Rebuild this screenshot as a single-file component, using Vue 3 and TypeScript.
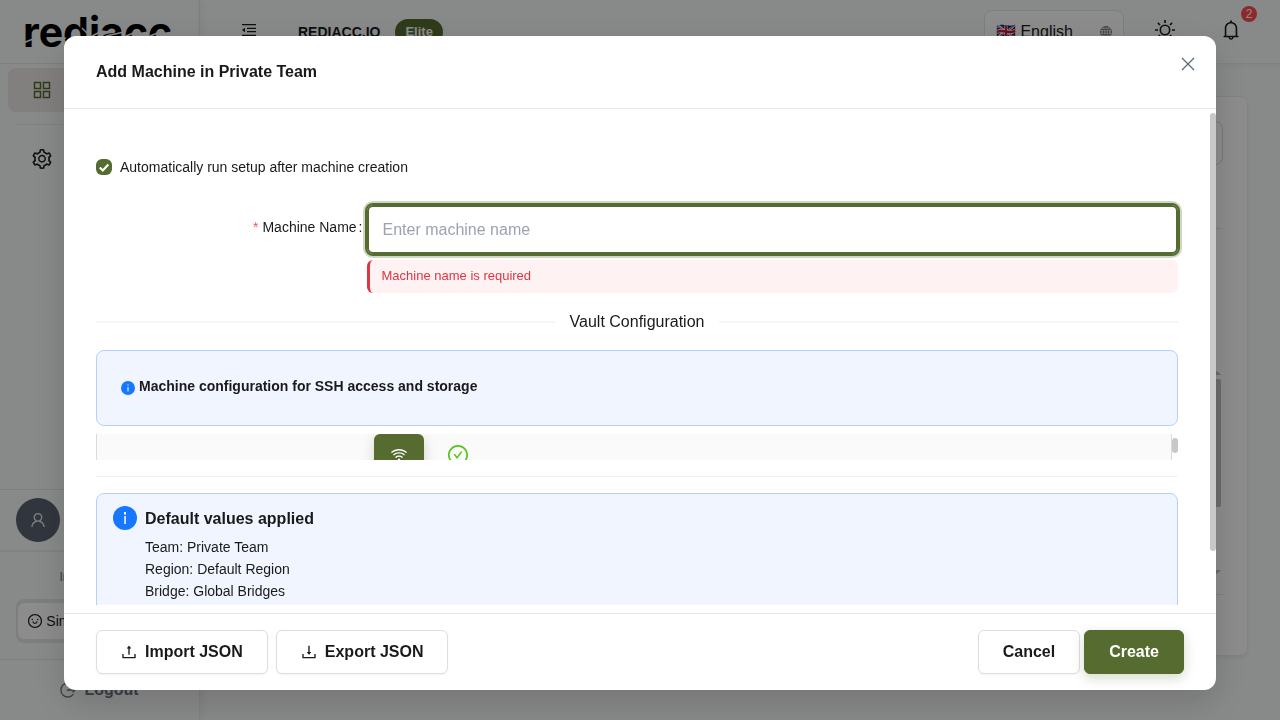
<script setup lang="ts">
import { ref } from 'vue'

const autoSetup = ref(true)
const machineName = ref('')
const language = ref('en')

const defaults: string[] = [
  'Team: Private Team',
  'Region: Default Region',
  'Bridge: Global Bridges',
]

const icons = {
  tray: 'M878 626h-60c-4.4 0-8 3.6-8 8v154H214V634c0-4.4-3.6-8-8-8h-60c-4.4 0-8 3.6-8 8v198c0 17.7 14.3 32 32 32h684c17.7 0 32-14.3 32-32V634c0-4.4-3.6-8-8-8z',
  up: 'M400 317.7h73.9V656c0 4.4 3.6 8 8 8h60c4.4 0 8-3.6 8-8V317.7H624c6.7 0 10.4-7.7 6.3-12.9L518.3 163a8 8 0 00-12.6 0l-112 141.7c-4.1 5.3-.4 13 6.3 13z',
  down: 'M505.7 661a8 8 0 0012.6 0l112-141.7c4.1-5.2.4-12.9-6.3-12.9h-74.1V168c0-4.4-3.6-8-8-8h-60c-4.4 0-8 3.6-8 8v338.3H400c-6.7 0-10.4 7.7-6.3 12.9l112 141.8z',
  ring: 'M512 64C264.6 64 64 264.6 64 512s200.6 448 448 448 448-200.6 448-448S759.4 64 512 64zm0 820c-205.4 0-372-166.6-372-372s166.6-372 372-372 372 166.6 372 372-166.6 372-372 372z',
  tick: 'M699 353h-46.9c-10.2 0-19.9 4.9-25.9 13.3L469 584.3l-71.2-98.8c-6-8.3-15.6-13.3-25.9-13.3H325c-6.5 0-10.3 7.4-6.5 12.7l124.6 172.8a31.8 31.8 0 0051.7 0l210.6-292c3.9-5.3.1-12.7-6.4-12.7z',
  smile: 'M288 421a48 48 0 1096 0 48 48 0 10-96 0zm352 0a48 48 0 1096 0 48 48 0 10-96 0zM664 533h-48.1c-4.2 0-7.8 3.2-8.1 7.4C604 589.9 562.5 629 512 629s-92.1-39.1-95.8-88.6c-.3-4.2-3.9-7.4-8.1-7.4H360a8 8 0 00-8 8.4c4.4 84.3 74.5 151.6 160 151.6s155.6-67.3 160-151.6a8 8 0 00-8-8.4z',
  bell: 'M816 768h-24V428c0-141.1-104.3-257.7-240-277.1V112c0-22.1-17.9-40-40-40s-40 17.9-40 40v38.9c-135.7 19.4-240 136-240 277.1v340h-24c-17.7 0-32 14.3-32 32v32c0 4.4 3.6 8 8 8h216c0 61.8 50.2 112 112 112s112-50.2 112-112h216c4.4 0 8-3.6 8-8v-32c0-17.7-14.3-32-32-32zM512 888c-26.5 0-48-21.5-48-48h96c0 26.5-21.5 48-48 48zM304 768V428c0-55.6 21.6-107.8 60.9-147.1S456.4 220 512 220c55.6 0 107.8 21.6 147.1 60.9S720 372.4 720 428v340H304z',
  user: 'M858.5 763.6a374 374 0 00-80.6-119.5 375.63 375.63 0 00-119.5-80.6c-.4-.2-.8-.3-1.2-.5C719.5 518 760 444.7 760 362c0-137-111-248-248-248S264 225 264 362c0 82.7 40.5 156 102.8 201.1-.4.2-.8.3-1.2.5-44.8 18.9-85 46-119.5 80.6a375.63 375.63 0 00-80.6 119.5A371.7 371.7 0 00136 901.8a8 8 0 008 8.2h60c4.4 0 7.9-3.5 8-7.8 2-77.2 33-149.5 87.8-204.3 56.7-56.7 132-87.9 212.2-87.9s155.5 31.2 212.2 87.9C779 752.7 810 825 812 902.2c.1 4.4 3.6 7.8 8 7.8h60a8 8 0 008-8.2c-1-47.8-10.9-94.3-29.5-138.2zM512 534c-45.9 0-89.1-17.9-121.6-50.4S340 407.9 340 362c0-45.9 17.9-89.1 50.4-121.6S466.1 190 512 190s89.1 17.9 121.6 50.4S684 316.1 684 362c0 45.9-17.9 89.1-50.4 121.6S557.9 534 512 534z',
  gear: 'M924.8 625.7l-65.5-56c3.1-19 4.7-38.4 4.7-57.8s-1.6-38.8-4.7-57.8l65.5-56a32.03 32.03 0 009.3-35.2l-.9-2.6a443.74 443.74 0 00-79.7-137.9l-1.8-2.1a32.12 32.12 0 00-35.1-9.5l-81.3 28.9c-30-24.6-63.5-44-99.7-57.6l-15.7-85a32.05 32.05 0 00-25.8-25.7l-2.7-.5c-52.1-9.4-106.9-9.4-159 0l-2.7.5a32.05 32.05 0 00-25.8 25.7l-15.8 85.4a351.86 351.86 0 00-99 57.4l-81.9-29.1a32 32 0 00-35.1 9.5l-1.8 2.1a446.02 446.02 0 00-79.7 137.9l-.9 2.6c-4.5 12.5-.8 26.5 9.3 35.2l66.3 56.6c-3.1 18.8-4.6 38-4.6 57.1 0 19.2 1.5 38.4 4.6 57.1L99 625.5a32.03 32.03 0 00-9.3 35.2l.9 2.6c18.1 50.4 44.9 96.9 79.7 137.9l1.8 2.1a32.12 32.12 0 0035.1 9.5l81.9-29.1c29.8 24.5 63.1 43.9 99 57.4l15.8 85.4a32.05 32.05 0 0025.8 25.7l2.7.5a449.4 449.4 0 00159 0l2.7-.5a32.05 32.05 0 0025.8-25.7l15.7-85a350 350 0 0099.7-57.6l81.3 28.9a32 32 0 0035.1-9.5l1.8-2.1c34.8-41.1 61.6-87.5 79.7-137.9l.9-2.6c4.5-12.3.8-26.3-9.3-35zM788.3 465.9c2.5 15.1 3.8 30.6 3.8 46.1s-1.3 31-3.8 46.1l-6.6 40.1 74.7 63.9a370.03 370.03 0 01-42.6 73.6L721 702.8l-31.4 25.8c-23.9 19.6-50.5 35-79.3 45.8l-38.1 14.3-17.9 97a377.5 377.5 0 01-85 0l-17.9-97.2-37.8-14.5c-28.5-10.8-55-26.2-78.7-45.7l-31.4-25.9-93.4 33.2c-17-22.9-31.2-47.6-42.6-73.6l75.5-64.5-6.5-40c-2.4-14.9-3.7-30.3-3.7-45.5 0-15.3 1.2-30.6 3.7-45.5l6.5-40-75.5-64.5c11.3-26.1 25.6-50.7 42.6-73.6l93.4 33.2 31.4-25.9c23.7-19.5 50.2-34.9 78.7-45.7l37.9-14.3 17.9-97.2c28.1-3.2 56.8-3.2 85 0l17.9 97 38.1 14.3c28.7 10.8 55.4 26.2 79.3 45.8l31.4 25.8 92.8-32.9c17 22.9 31.2 47.6 42.6 73.6L781.8 426l6.5 39.9zM512 326c-97.2 0-176 78.8-176 176s78.8 176 176 176 176-78.8 176-176-78.8-176-176-176zm79.2 255.2A111.6 111.6 0 01512 614c-29.9 0-58-11.7-79.2-32.8A111.6 111.6 0 01400 502c0-29.9 11.7-58 32.8-79.2C454 401.6 482.1 390 512 390c29.9 0 58 11.6 79.2 32.8A111.6 111.6 0 01624 502c0 29.9-11.7 58-32.8 79.2z',
  wifi: 'M723 620.5C666.8 571.6 593.4 542 513 542s-153.8 29.6-210.1 78.6a8.1 8.1 0 00-.8 11.2l36 42.9c2.9 3.4 8 3.8 11.4.9C393.1 637.2 450.3 614 513 614s119.9 23.2 163.5 61.5c3.4 2.9 8.5 2.5 11.4-.9l36-42.9c2.8-3.3 2.4-8.3-.9-11.2zm117.4-140.1C751.7 406.5 637.6 362 513 362s-238.7 44.5-327.5 118.4a8.05 8.05 0 00-1 11.3l36 42.9c2.8 3.4 7.9 3.8 11.2 1C308 472.2 406.1 434 513 434s205 38.2 281.2 101.6c3.4 2.8 8.4 2.4 11.2-1l36-42.9c2.8-3.4 2.4-8.5-1-11.3zm116.7-139C835.7 241.8 680.3 182 511 182c-168.2 0-322.6 59-443.7 157.4a8 8 0 00-1.1 11.4l36 42.9c2.8 3.3 7.8 3.8 11.1 1.1C222 306.3 360.3 254 511 254c151.8 0 291 53.5 400 142.7 3.4 2.8 8.4 2.3 11.2-1.1l36-42.9c2.9-3.4 2.4-8.5-1.1-11.3zM448 778a64 64 0 10128 0 64 64 0 10-128 0z',
}
</script>

<template>
  <div class="app">
    <aside class="sidebar">
      <a class="brand" href="#" aria-label="rediacc">
        <svg width="160" height="48" viewBox="0 0 160 48">
          <text class="wordmark" x="1" y="39">rediacc</text>
          <path class="cut" d="M1 35l10-4M28 34l16-4M60 20l8 8M70 28l10-5M84 28l18-4M104 28l10-4M128 28l10-4" />
        </svg>
      </a>
      <nav class="menu">
        <a class="menu-item active" href="#" aria-label="Dashboard">
          <svg width="20" height="20" viewBox="0 0 20 20" fill="none" stroke="currentColor" stroke-width="1.5">
            <path d="M2.500 2.500h6v6h-6zM11.500 2.500h6v6h-6zM2.500 11.500h6v6h-6zM11.500 11.500h6v6h-6z" />
          </svg>
        </a>
        <hr class="menu-rule" />
        <a class="menu-item" href="#" aria-label="Settings">
          <svg width="20" height="20" viewBox="64 64 896 896" fill="currentColor"><path :d="icons.gear" /></svg>
        </a>
      </nav>
      <div class="profile">
        <span class="avatar">
          <svg width="16" height="16" viewBox="64 64 896 896" fill="currentColor"><path :d="icons.user" /></svg>
        </span>
      </div>
      <div class="mode">
        <span class="mode-label">Interface Mode</span>
        <div class="segmented">
          <button type="button" class="segment on">
            <svg width="14" height="14" viewBox="64 64 896 896" fill="currentColor"><path :d="icons.ring" /><path :d="icons.smile" /></svg>
            Simple
          </button>
          <button type="button" class="segment">Expert</button>
        </div>
      </div>
      <button type="button" class="logout">
        <svg width="16" height="16" viewBox="0 0 16 16" fill="none" stroke="currentColor" stroke-width="1.300">
          <path d="M13.500 3.800A7 7 0 1 0 13.500 12.200M7 8h8M12.500 5.500L15 8l-2.500 2.500" />
        </svg>
        Logout
      </button>
    </aside>

    <div class="main">
      <header class="topbar">
        <button type="button" class="icon-btn fold" aria-label="Collapse menu">
          <svg width="16" height="16" viewBox="0 0 16 16" fill="none" stroke="currentColor" stroke-width="1.300">
            <path d="M1 2.700h14M6 6.300h9M6 9.700h9M1 13.300h14" />
            <path d="M4 5.700v4.600L1 8z" fill="currentColor" stroke="none" />
          </svg>
        </button>
        <strong class="org">REDIACC.IO</strong>
        <span class="plan">Elite</span>
        <div class="tools">
          <label class="lang">
            <select v-model="language" aria-label="Language">
              <option value="en">🇬🇧 English</option>
            </select>
            <svg width="12" height="12" viewBox="0 0 12 12" fill="none" stroke="currentColor">
              <circle cx="6" cy="6" r="5.500" />
              <ellipse cx="6" cy="6" rx="2.500" ry="5.500" />
              <path d="M6 .5v11M.5 6h11M1.300 3.500h9.400M1.300 8.500h9.400" />
            </svg>
          </label>
          <button type="button" class="icon-btn" aria-label="Switch theme">
            <svg width="20" height="20" viewBox="0 0 20 20" fill="none" stroke="currentColor" stroke-width="1.600">
              <circle cx="10" cy="10" r="4.700" />
              <path d="M10 0v3M10 17v3M0 10h3M17 10h3M2.900 2.900L5 5M15 15l2.100 2.100M2.900 17.100L5 15M15 5l2.100-2.100" />
            </svg>
          </button>
          <button type="button" class="icon-btn bell" aria-label="Notifications">
            <svg width="20" height="20" viewBox="64 64 896 896" fill="currentColor"><path :d="icons.bell" /></svg>
            <span class="count">2</span>
          </button>
        </div>
      </header>
      <main class="content">
        <section class="card">
          <div class="card-top"><span class="card-box"></span></div>
          <div class="card-list">
            <svg width="8" height="4" viewBox="0 0 8 4"><path d="M0 4l4-4 4 4z" fill="currentColor" /></svg>
            <span class="card-thumb"></span>
            <svg width="8" height="4" viewBox="0 0 8 4"><path d="M0 0l4 4 4-4z" fill="currentColor" /></svg>
          </div>
        </section>
      </main>
    </div>

    <div class="mask">
      <form class="modal" role="dialog" aria-labelledby="dialog-title" @submit.prevent>
        <header class="modal-head">
          <h2 id="dialog-title">Add Machine in Private Team</h2>
          <button type="button" class="close" aria-label="Close">
            <svg width="14" height="14" viewBox="0 0 14 14" fill="none" stroke="currentColor" stroke-width="1.300">
              <path d="M1 1l12 12M13 1L1 13" />
            </svg>
          </button>
        </header>

        <div class="modal-scroll">
          <div class="modal-body">
            <label class="check">
              <span class="check-mark">
                <input v-model="autoSetup" type="checkbox" />
                <svg width="16" height="16" viewBox="0 0 16 16" fill="none" stroke="#fff" stroke-width="2">
                  <path d="M3.800 8.500l3 3 5.500-6" />
                </svg>
              </span>
              Automatically run setup after machine creation
            </label>

            <div class="field">
              <label class="field-label" for="machine-name"><span class="star">*</span>Machine Name<span class="colon">:</span></label>
              <div class="field-control">
                <input id="machine-name" v-model="machineName" class="name-input" type="text" placeholder="Enter machine name" aria-describedby="name-error" />
                <div id="name-error" class="error" role="alert">Machine name is required</div>
              </div>
            </div>

            <div class="divider">Vault Configuration</div>

            <div class="notice">
              <svg width="14" height="14" viewBox="0 0 14 14">
                <circle cx="7" cy="7" r="7" fill="#1677ff" />
                <path d="M6.500 3.500h1v1h-1zM6.500 6h1v4.500h-1z" fill="#fff" />
              </svg>
              <strong>Machine configuration for SSH access and storage</strong>
            </div>

            <div class="vault">
              <div class="vault-pane">
                <button type="button" class="wifi" aria-label="Test connection">
                  <svg width="16" height="16" viewBox="64 64 896 896" fill="currentColor"><path :d="icons.wifi" /></svg>
                </button>
                <svg class="ok" width="20" height="20" viewBox="64 64 896 896" fill="currentColor"><path :d="icons.ring" /><path :d="icons.tick" /></svg>
              </div>
              <div class="vault-track"><span class="vault-thumb"></span></div>
            </div>

            <hr class="rule" />

            <div class="applied">
              <svg width="24" height="24" viewBox="0 0 24 24">
                <circle cx="12" cy="12" r="12" fill="#1677ff" />
                <path d="M11 6h2v2.500h-2zM11.300 10h1.500v8h-1.500z" fill="#fff" />
              </svg>
              <div>
                <strong class="applied-title">Default values applied</strong>
                <p v-for="line in defaults" :key="line">{{ line }}</p>
              </div>
            </div>
          </div>
          <div class="scroll-track"><span class="scroll-thumb"></span></div>
        </div>

        <footer class="modal-foot">
          <button type="button" class="btn">
            <svg width="16" height="16" viewBox="64 64 896 896" fill="currentColor"><path :d="icons.up" /><path :d="icons.tray" /></svg>
            Import JSON
          </button>
          <button type="button" class="btn">
            <svg width="16" height="16" viewBox="64 64 896 896" fill="currentColor"><path :d="icons.down" /><path :d="icons.tray" /></svg>
            Export JSON
          </button>
          <div class="actions">
            <button type="button" class="btn">Cancel</button>
            <button type="submit" class="btn primary">Create</button>
          </div>
        </footer>
      </form>
    </div>
  </div>
</template>

<style>
body {
  background: #f8faf9;
}
</style>

<style scoped>
* {
  box-sizing: border-box;
}
svg {
  display: block;
  flex: none;
}
.app {
  display: flex;
  height: 100vh;
  overflow: hidden;
  font-family: "Liberation Sans", Arial, sans-serif;
  font-size: 14px;
  color: #1a1a1a;
}
button,
input,
select {
  font: inherit;
  color: inherit;
}
button {
  display: flex;
  align-items: center;
  justify-content: center;
  padding: 0;
  border: 0;
  background: none;
}
hr {
  margin: 0;
  border: 0;
}

/* Sidebar */
.sidebar {
  display: flex;
  flex-direction: column;
  flex: none;
  width: 200px;
  border-right: 1px solid #e9ebea;
  box-shadow: 2px 0 8px rgba(0, 0, 0, 0.06);
}
.brand {
  display: flex;
  height: 64px;
  padding: 8px 0 0 22px;
  border-bottom: 1px solid #e6e8e7;
}
.wordmark {
  font-family: Inter, "Liberation Sans", sans-serif;
  font-size: 41px;
  font-weight: 700;
  fill: #000;
}
.cut {
  fill: none;
  stroke: #f8faf9;
  stroke-width: 1.500;
}
.menu {
  flex: 1;
  padding: 4px 8px;
}
.menu-item {
  display: flex;
  align-items: center;
  height: 44px;
  padding: 0 24px;
  border-radius: 8px;
  color: #1a1a1a;
}
.menu-item.active {
  background: #ebe9e5;
  color: #556b2f;
}
.menu-rule {
  height: 1px;
  margin: 12px 8px;
  background: #e9ebea;
}
.profile {
  padding: 8px 16px;
  border-top: 1px solid #e4e6e5;
  border-bottom: 2px solid #e9ebea;
}
.avatar {
  display: flex;
  align-items: center;
  justify-content: center;
  width: 44px;
  height: 44px;
  border-radius: 50%;
  background: #5a6270;
  color: #e4e6e8;
}
.mode {
  display: flex;
  flex-direction: column;
  gap: 14px;
  padding: 17px 16px 16px;
}
.mode-label {
  text-align: center;
  font-size: 12px;
  line-height: 16px;
  color: #6b7280;
}
.segmented {
  display: flex;
  padding: 2px 0;
  border: 2px solid #e4e6e8;
  border-radius: 8px;
  background: #e4e6e8;
}
.segment {
  flex: 1;
  height: 36px;
  gap: 4px;
}
.segment.on {
  border-radius: 6px;
  background: #fff;
}
.logout {
  gap: 8px;
  height: 61px;
  border-top: 1px solid #e4e6e5;
  font-size: 16px;
  font-weight: 700;
  color: #6b7280;
}

/* Main area */
.main {
  display: flex;
  flex: 1;
  flex-direction: column;
  min-width: 0;
}
.topbar {
  display: flex;
  align-items: center;
  height: 64px;
  padding: 0 24px 0 40px;
  border-bottom: 1px solid #e9ebea;
  box-shadow: 0 2px 8px rgba(0, 0, 0, 0.05);
}
.icon-btn {
  height: 44px;
  padding-bottom: 4px;
}
.fold {
  width: 18px;
  margin-right: 40px;
}
.org {
  font-size: 14px;
}
.plan {
  margin-left: 15px;
  padding: 0 10px;
  border-radius: 13px;
  background: #556b2f;
  color: #fff;
  font-size: 13px;
  font-weight: 700;
  line-height: 26px;
}
.tools {
  display: flex;
  align-items: center;
  gap: 22px;
  margin-left: auto;
}
.lang {
  display: flex;
  align-items: center;
  width: 140px;
  height: 44px;
  padding: 0 11px;
  border: 1px solid #e3e5ea;
  border-radius: 8px;
  background: #fff;
  color: #7c8290;
}
.lang select {
  flex: 1;
  min-width: 0;
  padding: 0;
  border: 0;
  appearance: none;
  background: none;
  font-size: 16px;
  color: #1a1a1a;
}
.tools .icon-btn {
  width: 38px;
}
.bell {
  position: relative;
}
.tools .bell {
  width: 50px;
}
.count {
  position: absolute;
  top: -4px;
  right: -1px;
  width: 16px;
  border-radius: 8px;
  background: #ff4d4f;
  color: #fff;
  font-size: 12px;
  line-height: 16px;
  text-align: center;
}
.content {
  flex: 1;
  padding: 32px 32px 64px;
}
.card {
  display: flex;
  flex-direction: column;
  height: 100%;
  padding: 24px;
  border: 1px solid #eceeed;
  border-radius: 8px;
  background: #fff;
  box-shadow: 0 2px 4px rgba(0, 0, 0, 0.06);
}
.card-top {
  height: 108px;
  border-bottom: 1px solid #e6e6e6;
}
.card-box {
  display: block;
  height: 44px;
  border: 1px solid #d9d9e0;
  border-radius: 8px;
}
.card-list {
  display: flex;
  flex: 1;
  flex-direction: column;
  align-items: flex-end;
  padding: 142px 2px 20px 0;
  margin-bottom: 36px;
  border-bottom: 1px solid #e6e6e6;
  color: #c1c1c1;
}
.card-thumb {
  width: 8px;
  height: 128px;
  margin: 4px 0 auto;
  border-radius: 2px;
  background: #c4c4c4;
}

/* Dialog */
.mask {
  position: fixed;
  inset: 0;
  display: flex;
  padding: 36px 5% 30px;
  background: rgba(0, 0, 0, 0.45);
}
.modal {
  display: flex;
  flex: 1;
  flex-direction: column;
  min-width: 0;
  border-radius: 12px;
  background: #fff;
  box-shadow: 0 12px 36px rgba(0, 0, 0, 0.16);
}
.modal-head {
  display: flex;
  align-items: flex-start;
  justify-content: space-between;
  padding: 24px 21px 24px 32px;
  border-bottom: 1px solid #e8e8ec;
}
.modal-head h2 {
  margin: 0;
  font-size: 16px;
  line-height: 24px;
}
.close {
  width: 14px;
  height: 8px;
  color: #5f6b7a;
}
.modal-scroll {
  display: flex;
  flex: 1;
  min-height: 0;
  margin: 4px 0 8px;
}
.modal-body {
  flex: 1;
  min-width: 0;
  padding: 44px 32px 48px;
  overflow-y: auto;
  scrollbar-width: none;
}
.scroll-track {
  flex: none;
  width: 6px;
}
.scroll-thumb {
  display: block;
  height: 89%;
  border-radius: 3px;
  background: #c8c8c8;
}
.check {
  display: flex;
  align-items: center;
  gap: 8px;
  line-height: 20px;
}
.check-mark {
  display: grid;
}
.check-mark > * {
  grid-area: 1 / 1;
}
.check-mark input {
  width: 16px;
  height: 16px;
  margin: 0;
  border-radius: 6px;
  appearance: none;
  background: #556b2f;
}
.check-mark svg {
  pointer-events: none;
}
.field {
  display: grid;
  grid-template-columns: 1fr 3fr;
  margin-top: 28px;
}
.field-label {
  display: flex;
  align-items: center;
  justify-content: flex-end;
  height: 44px;
  padding-right: 4px;
}
.star {
  margin-right: 4px;
  color: #ff4d4f;
}
.colon {
  margin-left: 2px;
}
.field-control {
  display: flex;
  flex-direction: column;
  gap: 6px;
  min-width: 0;
}
.name-input {
  width: 100%;
  height: 49px;
  padding: 0 14px;
  border: 2px solid #556b2f;
  border-radius: 6px;
  outline: 2px solid #556b2f;
  box-shadow: 0 0 0 4px rgba(85, 107, 47, 0.28);
  font-size: 16px;
}
.name-input::placeholder {
  color: #9ca3af;
}
.error {
  height: 33px;
  padding: 6px 12px;
  border-left: 3px solid #dc3545;
  border-radius: 6px;
  background: #fff2f2;
  color: #dc3545;
  font-size: 13px;
  line-height: 20px;
}
.divider {
  display: flex;
  align-items: center;
  gap: 15px;
  margin: 16px 0;
  font-size: 16px;
  line-height: 25px;
}
.divider::before,
.divider::after {
  content: "";
  flex: 1;
  height: 2px;
  background: #f5f5f5;
}
.notice {
  display: flex;
  align-items: center;
  gap: 4px;
  height: 76px;
  padding: 0 24px;
  border: 1px solid #b5d0ff;
  border-radius: 8px;
  background: #f0f5ff;
}
.notice strong {
  padding-bottom: 4px;
}
.vault {
  display: flex;
  height: 26px;
  margin: 8px 0 16px;
  overflow: hidden;
}
.vault-pane {
  display: flex;
  flex: 1;
  align-items: flex-start;
  gap: 24px;
  padding-left: 277px;
  border: solid #d9d9e0;
  border-width: 0 1px;
  background: #fafafa;
}
.wifi {
  width: 50px;
  height: 42px;
  border-radius: 6px;
  background: #556b2f;
  color: #fff;
  box-shadow: 0 4px 12px rgba(85, 107, 47, 0.25);
}
.ok {
  margin-top: 11px;
  color: #52c41a;
}
.vault-track {
  width: 6px;
  padding-top: 4px;
}
.vault-thumb {
  display: block;
  height: 15px;
  border-radius: 3px;
  background: #c8c8c8;
}
.rule {
  height: 1px;
  background: #f0f0f0;
}
.applied {
  display: flex;
  gap: 8px;
  margin-top: 16px;
  padding: 12px 16px;
  border: 1px solid #b5d0ff;
  border-radius: 8px;
  background: #f0f5ff;
}
.applied-title {
  display: block;
  margin-bottom: 4px;
  font-size: 16px;
  line-height: 26px;
}
.applied p {
  margin: 0;
  line-height: 22px;
}
.modal-foot {
  display: flex;
  gap: 8px;
  padding: 16px 32px;
  border-top: 1px solid #e8e8ec;
}
.actions {
  display: flex;
  gap: 4px;
  margin-left: auto;
}
.btn {
  gap: 8px;
  height: 44px;
  padding: 0 24px;
  border: 1px solid #dddee5;
  border-radius: 6px;
  background: #fff;
  box-shadow: 0 1px 2px rgba(0, 0, 0, 0.05);
  font-size: 16px;
  font-weight: 700;
}
.btn.primary {
  border-color: #556b2f;
  background: #556b2f;
  color: #fff;
  box-shadow: 0 4px 12px rgba(85, 107, 47, 0.25);
}
</style>
